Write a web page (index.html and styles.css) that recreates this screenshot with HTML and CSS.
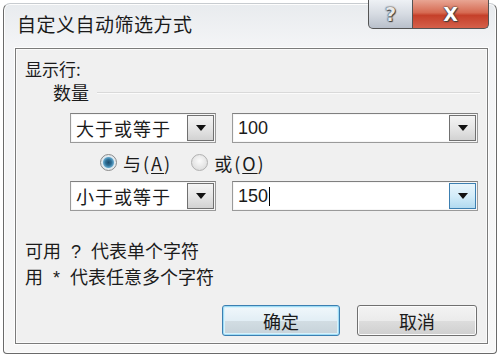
FILE: index.html
```html
<!DOCTYPE html>
<html lang="zh-CN">
<head>
    <meta charset="UTF-8">
    <meta name="viewport" content="width=device-width, initial-scale=1.0">
    <title>自定义自动筛选方式</title>
    <link rel="stylesheet" href="styles.css">
</head>
<body>
    <div class="window">
        <div class="titlebar">
            <span class="title">自定义自动筛选方式</span>
        </div>
        <div class="caption-buttons">
            <div class="cap-btn help">?</div>
            <div class="cap-btn close">X</div>
        </div>
        <div class="client">
            <div class="label">显示行:</div>
            <div class="field-row">
                <span class="field-name">数量</span>
                <span class="rule"></span>
            </div>
            <div class="criteria">
                <div class="combo op">大于或等于<span class="drop"><span class="arrow"></span></span></div>
                <div class="combo value">100<span class="drop"><span class="arrow"></span></span></div>
            </div>
            <div class="logic">
                <span class="radio checked"></span>
                <span class="radio-text">与(<u>A</u>)</span>
                <span class="radio"></span>
                <span class="radio-text">或(<u>O</u>)</span>
            </div>
            <div class="criteria">
                <div class="combo op">小于或等于<span class="drop"><span class="arrow"></span></span></div>
                <div class="combo value">150<span class="caret"></span><span class="drop hot"><span class="arrow"></span></span></div>
            </div>
            <div class="hint">
                <div>可用 <span class="sym">?</span> 代表单个字符</div>
                <div>用 <span class="sym">*</span> 代表任意多个字符</div>
            </div>
            <div class="actions">
                <button class="btn default">确定</button>
                <button class="btn">取消</button>
            </div>
        </div>
    </div>
</body>
</html>
```

FILE: styles.css
```css
body {
    margin: 0;
    padding: 3px 0 0 3px;
    background-color: #fff;
    font-family: "Noto Sans CJK SC", "Noto Sans", sans-serif;
    color: #1b1b1b;
}

.window {
    position: relative;
    width: 494px;
    height: 351px;
    box-sizing: border-box;
    border: 1px solid #6a6a6a;
    border-top-color: #c8ccd0;
    border-radius: 7px 7px 4px 4px;
    background: linear-gradient(to bottom, #e8ebee 0, #f3f4f6 40px, #f7f7f7 100%);
    box-shadow: inset 0 0 0 1px #fdfdfd;
}

.titlebar {
    height: 44px;
    padding: 8px 0 0 13px;
    box-sizing: border-box;
}

.title {
    font-size: 19px;
    letter-spacing: 0.5px;
    line-height: 24px;
    color: #1a1a1a;
}

.caption-buttons {
    position: absolute;
    top: -4px;
    left: 364px;
    display: flex;
}

.cap-btn {
    height: 29px;
    box-sizing: border-box;
    border: 1px solid #545454;
    border-top: none;
    display: flex;
    justify-content: center;
    align-items: center;
    font-family: "DejaVu Sans", sans-serif;
    font-weight: bold;
    color: #fff;
    text-shadow: 0 0 1px #333, 0 0 2px #333, 1px 1px 1px #444;
}

.help {
    width: 45px;
    border-radius: 0 0 0 5px;
    background: linear-gradient(to bottom, #eef1f5 0%, #d6dbe2 50%, #b9c0cb 100%);
    font-size: 19px;
    color: #e8e8e8;
}

.close {
    width: 76px;
    border-left: none;
    border-radius: 0 0 5px 0;
    background: linear-gradient(to bottom, #e8a593 0%, #d66a52 45%, #c5402a 55%, #d5604a 100%);
    font-size: 19px;
}

.client {
    height: 296px;
    margin: 0 8px 0 11px;
    box-sizing: border-box;
    border: 1px solid #7b7b7b;
    background-color: #f0f0f0;
    box-shadow: 0 0 0 1px #fefefe, inset 0 0 0 1px #fafafa;
    padding: 10px 7px 0 9px;
}

.label {
    font-size: 17px;
    line-height: 19px;
}

.field-row {
    display: flex;
    align-items: center;
    height: 21px;
    margin-top: 4px;
    padding-left: 28px;
}

.field-name {
    font-size: 18px;
    line-height: 21px;
}

.rule {
    flex: 1;
    margin-left: 8px;
    border-top: 1px solid #d9d9d9;
    border-bottom: 1px solid #fbfbfb;
}

.criteria {
    display: flex;
    gap: 16px;
    margin-left: 45px;
    margin-top: 10px;
}

.logic + .criteria {
    margin-top: 0;
}

.combo {
    position: relative;
    height: 30px;
    box-sizing: border-box;
    border: 1px solid #9a9a9a;
    border-top-color: #7f7f7f;
    background-color: #fff;
    box-shadow: inset 0 0 0 1px #f6f6f6;
    display: flex;
    align-items: center;
    padding-left: 5px;
    font-size: 18px;
    letter-spacing: 1px;
}

.combo.op {
    width: 146px;
}

.combo.value {
    width: 246px;
    font-family: "Liberation Sans", sans-serif;
    letter-spacing: 0;
}

.caret {
    display: inline-block;
    width: 1px;
    height: 19px;
    margin-left: 1px;
    background-color: #000;
}

.drop {
    position: absolute;
    right: 1px;
    top: 1px;
    width: 27px;
    height: 26px;
    box-sizing: border-box;
    border: 1px solid #707070;
    background: linear-gradient(to bottom, #f4f4f4 0%, #e6e6e6 50%, #d2d2d2 100%);
    display: flex;
    justify-content: center;
    align-items: center;
}

.drop.hot {
    border-color: #3c7fb1;
    background: linear-gradient(to bottom, #e8f5fc 0%, #d3ecf9 50%, #b2daf0 100%);
}

.arrow {
    width: 0;
    height: 0;
    border-left: 5px solid transparent;
    border-right: 5px solid transparent;
    border-top: 6px solid #111;
}

.logic {
    display: flex;
    align-items: center;
    height: 38px;
    padding-top: 1px;
    box-sizing: border-box;
    margin-left: 75px;
    font-size: 18px;
}

.radio {
    width: 17px;
    height: 17px;
    box-sizing: border-box;
    border-radius: 50%;
    border: 1px solid #b0b0b0;
    background: radial-gradient(circle at 50% 40%, #fbfbfb 0, #e4e4e4 60%, #d6d6d6 100%);
}

.radio.checked {
    border-color: #8a8a8a;
    background: radial-gradient(circle at 50% 50%, #1e4b6b 0, #2e6f96 3px, #5fa3c8 5px, #dfe8ee 6px, #eef2f4 100%);
}

.radio-text {
    margin-left: 6px;
    margin-right: 19px;
    letter-spacing: 2px;
}

.radio-text u {
    text-underline-offset: 2px;
}

.hint {
    margin-top: 27px;
    font-size: 18px;
    line-height: 24px;
}

.sym {
    font-family: "Liberation Sans", sans-serif;
    margin: 0 6px;
}

.actions {
    display: flex;
    justify-content: flex-end;
    gap: 17px;
    margin-top: 15px;
    margin-right: 3px;
}

.btn {
    width: 120px;
    height: 31px;
    border: 1px solid #707070;
    border-radius: 3px;
    background: linear-gradient(to bottom, #f3f3f3 0%, #ebebeb 50%, #dddddd 51%, #cfcfcf 100%);
    box-shadow: inset 0 0 0 1px #fcfcfc;
    font-family: "Noto Sans CJK SC", sans-serif;
    font-size: 18px;
    color: #1b1b1b;
    padding: 0;
}

.btn.default {
    width: 118px;
    border-color: #3c7fb1;
    box-shadow: inset 0 0 0 1px #9fdcf5, inset 0 0 0 2px #d8f1fb;
    background: linear-gradient(to bottom, #f1f8fc 0%, #e2eef5 50%, #d2dde3 51%, #c6d2d9 100%);
}
```
